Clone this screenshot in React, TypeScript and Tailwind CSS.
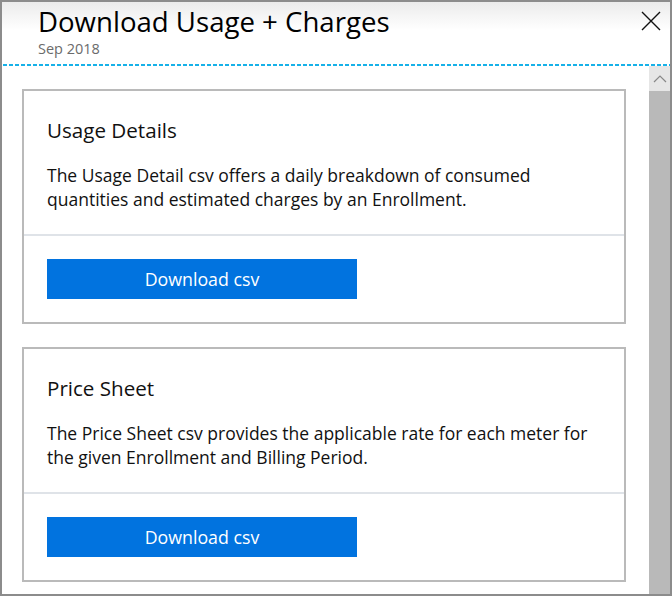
import React from 'react';

const font = { fontFamily: '"Open Sans", "Noto Sans", sans-serif' };

const ExportCard: React.FC<{ title: string; description: string }> = ({ title, description }) => {
    return (
        <div className="w-[604px] border-2 border-[#bababa] bg-white">
            <div className="px-[23px] pt-[25px] pb-[23px]">
                <h2 className="text-[20.6px] leading-[28px] text-[#111]">{title}</h2>
                <p className="mt-[19px] text-[17.5px] leading-[24px] text-[#111]">{description}</p>
            </div>
            <div className="h-[2px] bg-[#dfe3e8]" />
            <div className="px-[23px] pt-[23px] pb-[23px]">
                <button className="w-[310px] h-[40px] bg-[#0173df] text-white text-[17.8px] leading-[40px]">
                    Download csv
                </button>
            </div>
        </div>
    );
};

const App: React.FC = () => {
    return (
        <div className="w-[672px] h-[596px] border-2 border-[#8c8c8c] bg-white flex flex-col overflow-hidden" style={font}>
            {/* Header */}
            <div className="relative h-[62px] shrink-0 bg-[linear-gradient(#ebebeb,#ffffff_45%)] pl-[36px]">
                <h1 className="pt-[2px] text-[27.6px] leading-[35px] text-black">Download Usage + Charges</h1>
                <div className="text-[14.5px] leading-[20px] text-[#6b6b6b]">Sep 2018</div>
                <button className="absolute right-[8px] top-[8px] w-[22px] h-[22px] flex items-center justify-center">
                    <svg width="20" height="20" viewBox="0 0 20 20">
                        <path d="M1 1 L19 19 M19 1 L1 19" stroke="#111" strokeWidth="1.4" />
                    </svg>
                </button>
            </div>

            {/* Dashed focus line */}
            <div className="h-[2px] shrink-0 ml-[1px] bg-[repeating-linear-gradient(90deg,#17b1e8_0_4px,transparent_4px_6px)]" />

            {/* Body */}
            <div className="flex flex-1 min-h-0">
                <div className="flex-1 overflow-hidden pl-[20px] pt-[23px] flex flex-col gap-[23px]">
                    <ExportCard
                        title="Usage Details"
                        description="The Usage Detail csv offers a daily breakdown of consumed quantities and estimated charges by an Enrollment."
                    />
                    <ExportCard
                        title="Price Sheet"
                        description="The Price Sheet csv provides the applicable rate for each meter for the given Enrollment and Billing Period."
                    />
                </div>

                {/* Scrollbar */}
                <div className="w-[21px] shrink-0 flex flex-col">
                    <div className="h-[25px] bg-[#e6e6e6] flex items-center justify-center">
                        <svg width="14" height="8" viewBox="0 0 14 8">
                            <path d="M1 7 L7 1 L13 7" fill="none" stroke="#888" strokeWidth="1.2" />
                        </svg>
                    </div>
                    <div className="flex-1 bg-[#b9b9b9]" />
                </div>
            </div>
        </div>
    );
};

export default App;
